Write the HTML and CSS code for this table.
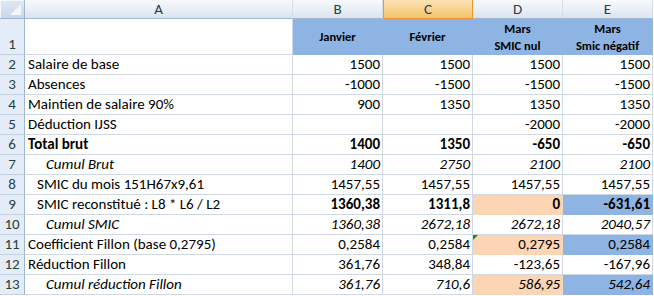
FILE: index.html
```html
<!DOCTYPE html>
<html>
<head>
<meta charset="utf-8">
<link rel="stylesheet" href="styles.css">
</head>
<body>
<div class="sheet">
  <div class="corner"><span class="tri"></span></div>
  <div class="colh">A</div>
  <div class="colh">B</div>
  <div class="colh sel">C</div>
  <div class="colh">D</div>
  <div class="colh">E</div>

  <div class="rowh r1">1</div>
  <div class="c"></div>
  <div class="c hd">Janvier</div>
  <div class="c hd">Février</div>
  <div class="c hd">Mars<br>SMIC nul</div>
  <div class="c hd">Mars<br>Smic négatif</div>

  <div class="rowh">2</div>
  <div class="c lab">Salaire de base</div>
  <div class="c n">1500</div><div class="c n">1500</div><div class="c n">1500</div><div class="c n">1500</div>

  <div class="rowh">3</div>
  <div class="c lab">Absences</div>
  <div class="c n">-1000</div><div class="c n">-1500</div><div class="c n">-1500</div><div class="c n">-1500</div>

  <div class="rowh">4</div>
  <div class="c lab">Maintien de salaire 90%</div>
  <div class="c n">900</div><div class="c n">1350</div><div class="c n">1350</div><div class="c n">1350</div>

  <div class="rowh">5</div>
  <div class="c lab">Déduction IJSS</div>
  <div class="c n"></div><div class="c n"></div><div class="c n">-2000</div><div class="c n">-2000</div>

  <div class="rowh">6</div>
  <div class="c lab b">Total brut</div>
  <div class="c n b">1400</div><div class="c n b">1350</div><div class="c n b">-650</div><div class="c n b">-650</div>

  <div class="rowh">7</div>
  <div class="c lab ind2 i">Cumul Brut</div>
  <div class="c n i">1400</div><div class="c n i">2750</div><div class="c n i">2100</div><div class="c n i">2100</div>

  <div class="rowh">8</div>
  <div class="c lab ind1">SMIC du mois 151H67x9,61</div>
  <div class="c n">1457,55</div><div class="c n">1457,55</div><div class="c n">1457,55</div><div class="c n">1457,55</div>

  <div class="rowh">9</div>
  <div class="c lab ind1">SMIC reconstitué : L8 * L6 / L2</div>
  <div class="c n b">1360,38</div><div class="c n b">1311,8</div><div class="c n b org">0</div><div class="c n b blu">-631,61</div>

  <div class="rowh">10</div>
  <div class="c lab ind2 i">Cumul SMIC</div>
  <div class="c n i">1360,38</div><div class="c n i">2672,18</div><div class="c n i">2672,18</div><div class="c n i">2040,57</div>

  <div class="rowh">11</div>
  <div class="c lab">Coefficient Fillon (base 0,2795)</div>
  <div class="c n">0,2584</div><div class="c n">0,2584</div><div class="c n org flag">0,2795</div><div class="c n blu">0,2584</div>

  <div class="rowh">12</div>
  <div class="c lab">Réduction Fillon</div>
  <div class="c n">361,76</div><div class="c n">348,84</div><div class="c n">-123,65</div><div class="c n">-167,96</div>

  <div class="rowh">13</div>
  <div class="c lab ind2 i">Cumul réduction Fillon</div>
  <div class="c n i">361,76</div><div class="c n i">710,6</div><div class="c n i org">586,95</div><div class="c n i blu">542,64</div>
</div>
</body>
</html>
```

FILE: styles.css
```css
html, body {
  margin: 0;
  padding: 0;
  background: #ffffff;
}

.sheet {
  display: grid;
  grid-template-columns: 25px 268px 90px 90px 90px 90px;
  grid-template-rows: 19px 36px repeat(12, 20px);
  font-family: "Carlito", "Lato", "Liberation Sans", sans-serif;
  font-size: 15px;
  color: #000;
}

.corner {
  position: relative;
  box-sizing: border-box;
  background: linear-gradient(#dfe8f5, #c9d8ec);
  border-right: 1px solid #9eb6ce;
  border-bottom: 1px solid #9eb6ce;
  box-shadow: inset 1px 1px 0 #f4f8fc;
}

.corner .tri {
  position: absolute;
  right: 3px;
  bottom: 3px;
  width: 0;
  height: 0;
  border-left: 11px solid transparent;
  border-bottom: 11px solid #f3f6fb;
}

.colh {
  box-sizing: border-box;
  background: linear-gradient(#f7f9fc 0%, #e9eef6 55%, #dae3ef 100%);
  border-right: 1px solid #d5dde8;
  border-bottom: 1px solid #9eb6ce;
  color: #27413e;
  font-size: 15px;
  display: flex;
  align-items: center;
  justify-content: center;
  line-height: 1;
}

.colh.sel {
  background: linear-gradient(#fae2b4 0%, #f7d28c 55%, #f2c46a 100%);
  border: 1px solid #f29436;
  border-top: none;
  color: #1f3a5a;
}

.rowh {
  box-sizing: border-box;
  background: #e4ecf7;
  border-right: 1px solid #9eb6ce;
  border-bottom: 1px solid #c5d1e0;
  color: #27413e;
  display: flex;
  align-items: flex-end;
  justify-content: center;
  line-height: 19px;
  font-size: 15px;
}

.c {
  box-sizing: border-box;
  border-right: 1px solid #d0d7e5;
  border-bottom: 1px solid #d0d7e5;
  line-height: 19px;
  white-space: nowrap;
  overflow: hidden;
  position: relative;
}

.lab {
  padding-left: 3px;
}

.ind1 {
  padding-left: 12px;
}

.ind2 {
  padding-left: 21px;
}

.n {
  text-align: right;
  padding-right: 2px;
}

.b {
  font-weight: bold;
}

.i {
  font-style: italic;
}

.hd {
  background: #8db4e2;
  border-color: #8db4e2;
  font-weight: bold;
  font-size: 12.5px;
  line-height: 17px;
  text-align: center;
  display: flex;
  align-items: center;
  justify-content: center;
}

.org {
  background: #fcd5b4;
  border-color: #fcd5b4;
}

.blu {
  background: #8db4e2;
  border-color: #8db4e2;
}

.flag::before {
  content: "";
  position: absolute;
  left: 0;
  top: 0;
  width: 0;
  height: 0;
  border-top: 5px solid #1a8a1a;
  border-right: 5px solid transparent;
}
```
